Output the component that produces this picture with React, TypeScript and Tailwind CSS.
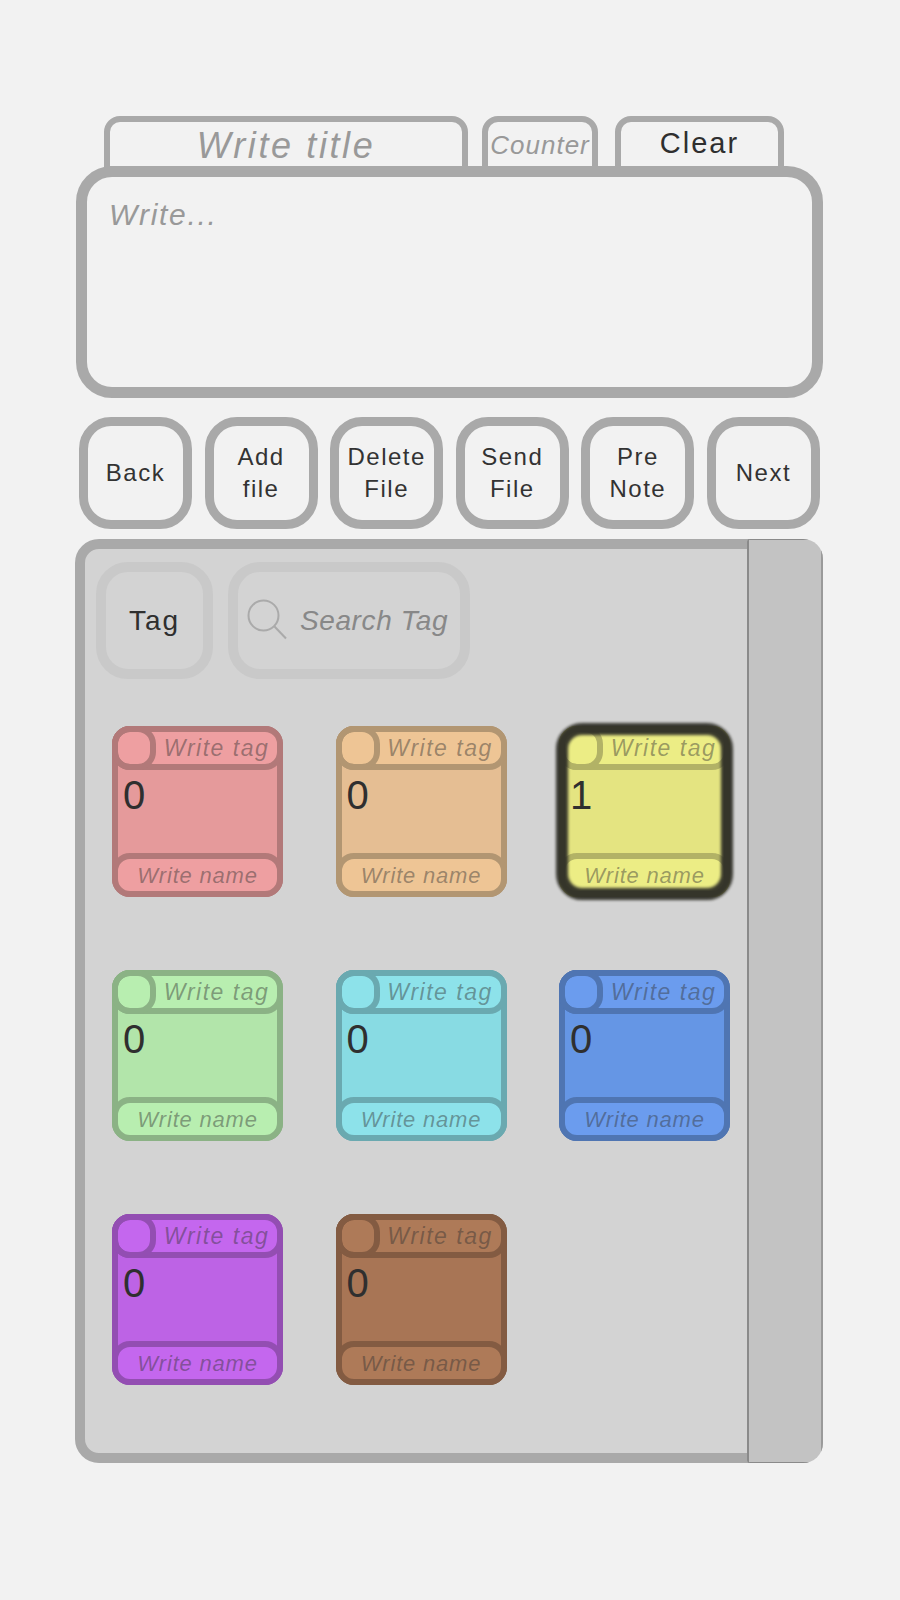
import React from 'react';

const hand = "font-['Liberation_Sans',sans-serif]";

const tags = [
  { n: '0', body: 'bg-[#e59a9b]', head: 'bg-[#ee9fa1]', line: 'border-[#b27979]' },
  { n: '0', body: 'bg-[#e5be93]', head: 'bg-[#eec595]', line: 'border-[#b29672]' },
  { n: '1', body: 'bg-[#e4e481]', head: 'bg-[#eced85]', line: 'border-[#b2b266]', on: true },
  { n: '0', body: 'bg-[#b2e5aa]', head: 'bg-[#b8eeb0]', line: 'border-[#8bb285]' },
  { n: '0', body: 'bg-[#88dbe3]', head: 'bg-[#8de2ea]', line: 'border-[#6aa9b0]' },
  { n: '0', body: 'bg-[#6596e5]', head: 'bg-[#6b9cee]', line: 'border-[#4f75b2]' },
  { n: '0', body: 'bg-[#bd63e5]', head: 'bg-[#c467ee]', line: 'border-[#934eb2]' },
  { n: '0', body: 'bg-[#a87555]', head: 'bg-[#ae7a58]', line: 'border-[#835b42]' },
];

const actions = [['Back'], ['Add', 'file'], ['Delete', 'File'], ['Send', 'File'], ['Pre', 'Note'], ['Next']];

const TagCard = ({ n, body, head, line, on }: { n: string; body: string; head: string; line: string; on?: boolean }) => (
  <div className={`relative w-[171px] h-[171px] rounded-[18px] border-[6px] flex flex-col ${body} ${line}`}>
    <div className={`flex h-[44px] shrink-0 -mx-[6px] -mt-[6px] rounded-[18px] border-[6px] ${head} ${line}`}>
      <div className={`shrink-0 w-[44px] h-[44px] -m-[6px] rounded-[18px] border-[6px] ${line}`} />
      <div className="flex-1 flex items-center justify-center pl-[6px]">
        <span className={`${hand} italic text-[23px] text-[#333]/45 tracking-[1.5px] whitespace-nowrap`}>Write tag</span>
      </div>
    </div>
    <div className={`flex-1 ${hand} text-[40px] leading-[46px] text-[#2f2f2f] pl-[5px] pt-[2px]`}>{n}</div>
    <div className={`h-[44px] shrink-0 -mx-[6px] -mb-[6px] rounded-[18px] border-[6px] flex items-center justify-center ${head} ${line}`}>
      <span className={`${hand} italic text-[22px] text-[#333]/45 tracking-[0.8px] whitespace-nowrap`}>Write name</span>
    </div>
    {on && (
      <div className="absolute -inset-[9px] rounded-[26px] border-[12px] border-[#2f2f27] opacity-95 blur-[1.5px] pointer-events-none" />
    )}
  </div>
);

export default function App() {
  return (
    <div className={`w-[900px] h-[1600px] bg-[#f2f2f2] pt-[116px] pl-[76px] ${hand}`}>
      <div className="w-[747px]">
        <div className="flex h-[50px] pl-[28px]">
          <div className="w-[364px] h-[56px] rounded-t-[16px] border-[6px] border-[#a9a9a9] flex items-center justify-center pt-[4px]">
            <span className="italic text-[36px] text-[#999] tracking-[2.6px]">Write title</span>
          </div>
          <div className="ml-[14px] w-[116px] h-[56px] rounded-t-[16px] border-[6px] border-[#a9a9a9] flex items-center justify-center pt-[3px]">
            <span className="italic text-[26px] text-[#999] tracking-[1px]">Counter</span>
          </div>
          <div className="ml-[17px] w-[169px] h-[56px] rounded-t-[16px] border-[6px] border-[#a9a9a9] flex items-center justify-center">
            <span className="text-[29px] text-[#2f2f2f] tracking-[2px]">Clear</span>
          </div>
        </div>
        <div className="relative h-[232px] rounded-[36px] border-[11px] border-[#a9a9a9] bg-[#f2f2f2] pl-[22px] pt-[15px]">
          <span className="italic text-[30px] text-[#999] tracking-[1.7px]">Write...</span>
        </div>
        <div className="flex justify-between pl-[3px] pr-[3px] mt-[19px]">
          {actions.map((lines) => (
            <div key={lines[0]} className="w-[113px] h-[112px] rounded-[32px] border-[9px] border-[#a9a9a9] flex flex-col items-center justify-center">
              {lines.map((t) => (
                <span key={t} className="text-[24px] leading-[32px] text-[#333] tracking-[1.5px]">{t}</span>
              ))}
            </div>
          ))}
        </div>
        <div className="relative mt-[10px] h-[924px] -ml-[1px] w-[748px] rounded-[24px] border-[10px] border-[#a9a9a9] bg-[#d3d3d3]">
          <div className="flex gap-[15px] pl-[11px] pt-[13px]">
            <div className="w-[117px] h-[117px] rounded-[32px] border-[10px] border-[#c9c9c9] flex items-center justify-center">
              <span className="text-[28px] text-[#2f2f2f] tracking-[2px]">Tag</span>
            </div>
            <div className="w-[242px] h-[117px] rounded-[32px] border-[10px] border-[#c9c9c9] flex items-center pl-[8px]">
              <svg width="44" height="44" viewBox="0 0 44 44" fill="none" stroke="#aaaaaa" strokeWidth="2" className="shrink-0">
                <circle cx="17.5" cy="16.5" r="15" />
                <path d="M28 27 L40 39.5" />
              </svg>
              <span className="ml-[10px] italic text-[28px] text-[#888] tracking-[0.6px] whitespace-nowrap">Search Tag</span>
            </div>
          </div>
          <div className="grid grid-cols-[171px_171px_171px] gap-x-[52.5px] gap-y-[73px] pl-[27px] pt-[47px]">
            {tags.map((t, i) => (
              <TagCard key={i} {...t} />
            ))}
          </div>
          <div className="absolute -top-[10px] -bottom-[10px] -right-[10px] w-[76px] overflow-hidden rounded-l-[3px] rounded-r-[20px]">
            <div className="h-full bg-[#c3c3c3] border-l-2 border-r-2 border-y border-[#8a8a8a] border-r-[#9a9a9a]" />
          </div>
        </div>
      </div>
    </div>
  );
}
